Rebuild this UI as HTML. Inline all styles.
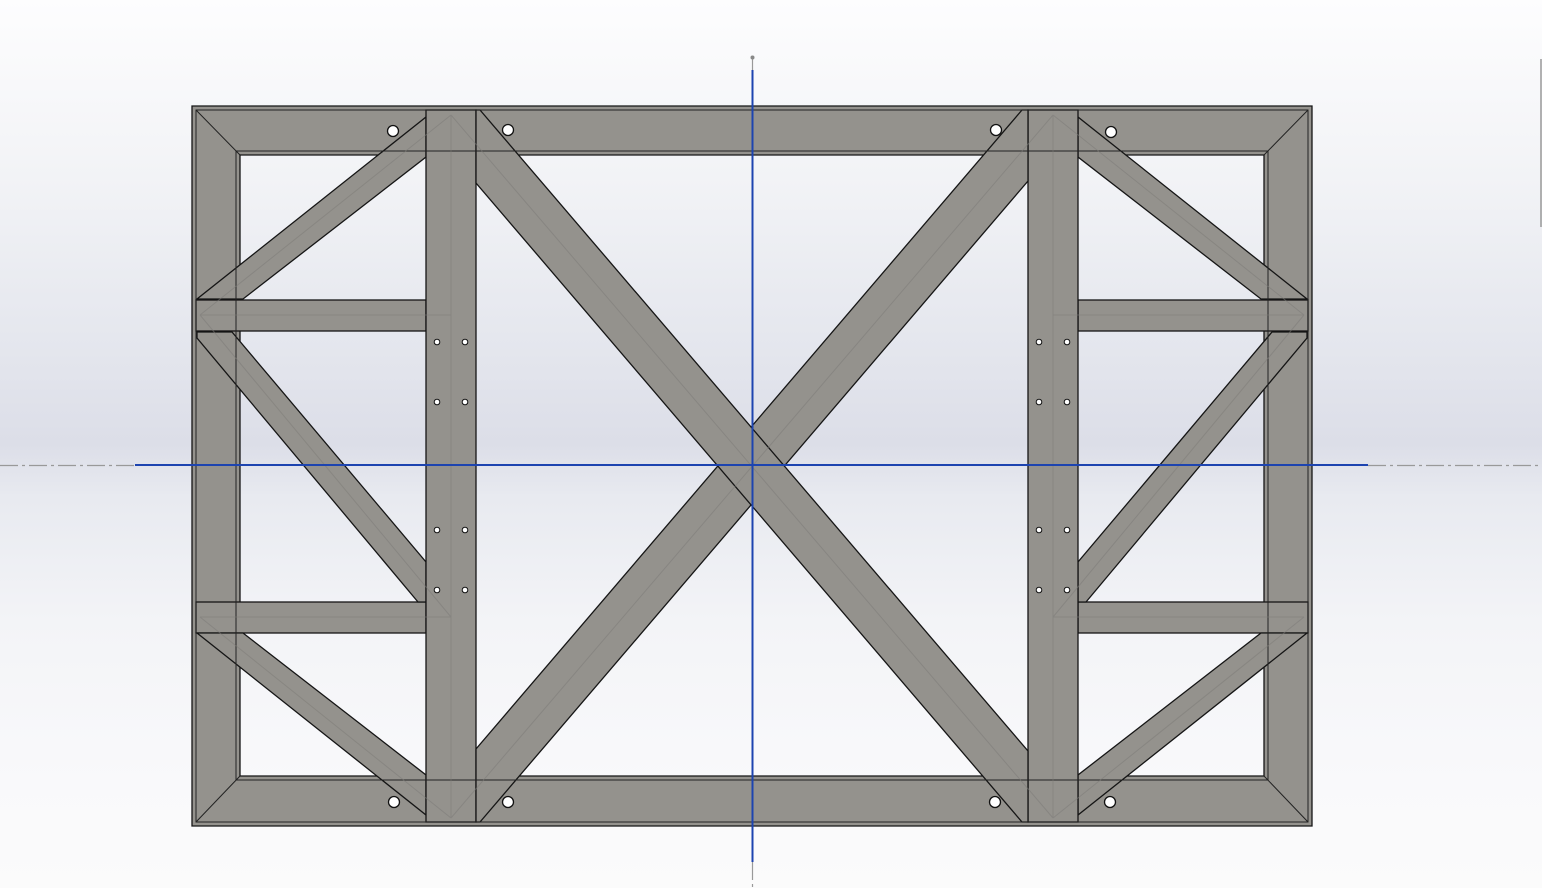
<!DOCTYPE html>
<html><head><style>
html,body{margin:0;padding:0;width:1542px;height:888px;overflow:hidden}
body{background:linear-gradient(180deg,#fdfdfe 0%,#f2f3f6 20%,#e5e7ee 38%,#dcdee8 50%,#e8eaf0 56%,#f3f4f7 70%,#f9f9fb 88%,#fbfbfb 100%)}
svg{position:absolute;left:0;top:0}
</style></head><body>
<svg width="1542" height="888" viewBox="0 0 1542 888" xmlns="http://www.w3.org/2000/svg">
<g fill="#94928d" stroke="#151515" stroke-width="1.3" stroke-linejoin="miter">
<path fill-rule="evenodd" d="M192 106H1312V826H192Z M240 155H1264V776H240Z"/>
<rect x="196" y="300" width="230" height="31"/>
<rect x="196" y="602" width="230" height="31"/>
<rect x="1078" y="300" width="230" height="31"/>
<rect x="1078" y="602" width="230" height="31"/>
<polygon points="197,299 243,299 426,157 426,117"/>
<polygon points="197,633 243,633 426,775 426,815"/>
<polygon points="197,332 232,332 426,562 426,602 418,602 197,338"/>
<polygon points="1307,299 1261,299 1078,157 1078,117"/>
<polygon points="1307,633 1261,633 1078,775 1078,815"/>
<polygon points="1307,332 1272,332 1078,562 1078,602 1086,602 1307,338"/>
<rect x="426" y="110" width="50" height="712"/>
<rect x="1028" y="110" width="50" height="712"/>
<polygon points="476,822 480,822 1028,181 1028,110 1022,110 476,749"/>
<polygon points="476,110 480,110 1028,751 1028,822 1022,822 476,183"/>
</g>
<g fill="none" stroke="#222" stroke-width="1">
<rect x="196" y="110" width="1112" height="712"/>
<rect x="236" y="151" width="1032" height="629"/>
<line x1="196" y1="110" x2="240" y2="155"/><line x1="1308" y1="110" x2="1264" y2="155"/>
<line x1="196" y1="822" x2="240" y2="776"/><line x1="1308" y1="822" x2="1264" y2="776"/>
</g>
<g stroke="#7d7c79" stroke-width="1" fill="none" opacity="0.55">
<line x1="451" y1="115" x2="451" y2="818"/><line x1="1053" y1="115" x2="1053" y2="818"/>
<line x1="200" y1="315" x2="451" y2="315"/><line x1="200" y1="617" x2="451" y2="617"/>
<line x1="1053" y1="315" x2="1304" y2="315"/><line x1="1053" y1="617" x2="1304" y2="617"/>
<line x1="200" y1="315" x2="451" y2="115"/><line x1="200" y1="617" x2="451" y2="818"/>
<line x1="1304" y1="315" x2="1053" y2="115"/><line x1="1304" y1="617" x2="1053" y2="818"/>
<line x1="451" y1="115" x2="1053" y2="818"/><line x1="451" y1="818" x2="1053" y2="115"/>
<line x1="200" y1="315" x2="451" y2="617"/><line x1="1304" y1="315" x2="1053" y2="617"/>
</g>
<g fill="#fff" stroke="#111" stroke-width="1.3">
<circle cx="393" cy="131" r="5.5"/><circle cx="508" cy="130" r="5.5"/>
<circle cx="996" cy="130" r="5.5"/><circle cx="1111" cy="132" r="5.5"/>
<circle cx="394" cy="802" r="5.5"/><circle cx="508" cy="802" r="5.5"/>
<circle cx="995" cy="802" r="5.5"/><circle cx="1110" cy="802" r="5.5"/>
</g>
<g fill="#fff" stroke="#111" stroke-width="1">
<circle cx="437" cy="342" r="2.8"/><circle cx="465" cy="342" r="2.8"/>
<circle cx="437" cy="402" r="2.8"/><circle cx="465" cy="402" r="2.8"/>
<circle cx="437" cy="530" r="2.8"/><circle cx="465" cy="530" r="2.8"/>
<circle cx="437" cy="590" r="2.8"/><circle cx="465" cy="590" r="2.8"/>
<circle cx="1039" cy="342" r="2.8"/><circle cx="1067" cy="342" r="2.8"/>
<circle cx="1039" cy="402" r="2.8"/><circle cx="1067" cy="402" r="2.8"/>
<circle cx="1039" cy="530" r="2.8"/><circle cx="1067" cy="530" r="2.8"/>
<circle cx="1039" cy="590" r="2.8"/><circle cx="1067" cy="590" r="2.8"/>
</g>
<g stroke="#999" stroke-width="1.2" stroke-dasharray="18,4,3,4" fill="none">
<line x1="0" y1="465.5" x2="135" y2="465.5"/>
<line x1="1368" y1="465.5" x2="1542" y2="465.5"/>
<line x1="752.5" y1="57" x2="752.5" y2="70"/>
<line x1="752.5" y1="862" x2="752.5" y2="888"/>
</g>
<circle cx="752.5" cy="57.5" r="2" fill="#888"/>
<line x1="1541" y1="59" x2="1541" y2="227" stroke="#999" stroke-width="1.5"/>
<g stroke="#1d44b0" stroke-width="2">
<line x1="135" y1="465" x2="1368" y2="465"/>
<line x1="752.5" y1="70" x2="752.5" y2="862"/>
</g>
</svg>
</body></html>
